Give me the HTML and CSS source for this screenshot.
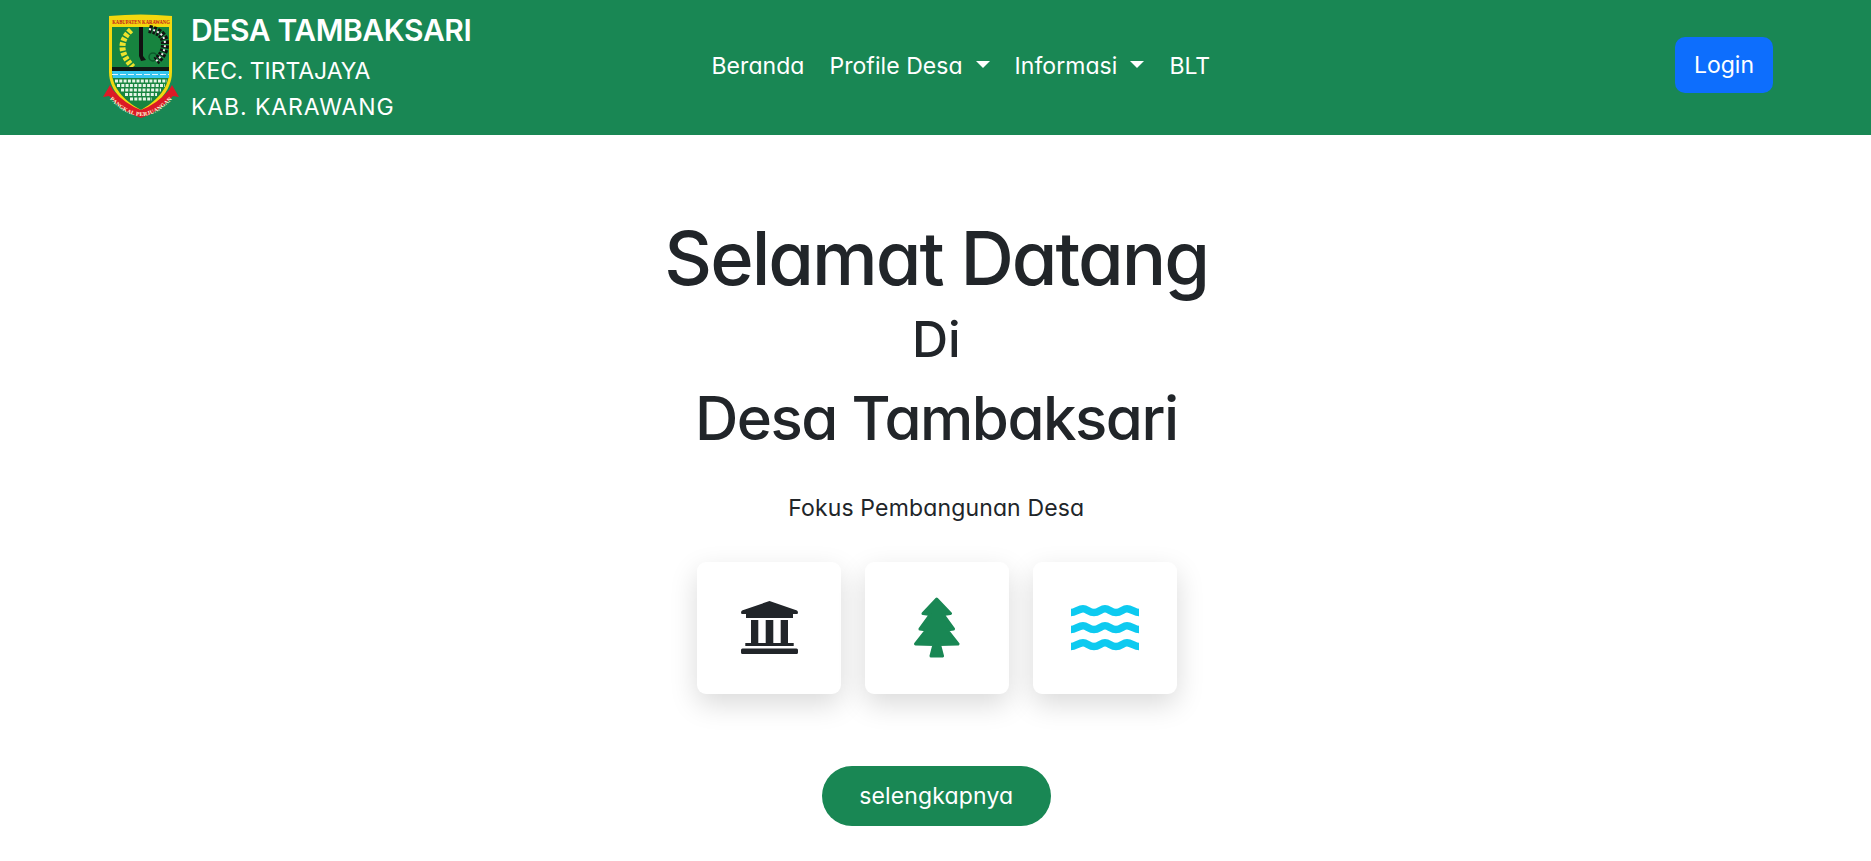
FILE: index.html
```html
<!DOCTYPE html>
<html lang="id">
<head>
<meta charset="utf-8">
<title>Desa Tambaksari</title>
<link rel="stylesheet" href="styles.css">
</head>
<body>
<nav class="navbar">
  <a class="brand" href="#">
    <svg class="logo" viewBox="0 0 84 110" aria-hidden="true">
      <defs><path id="ribbon-arc" d="M8 87 Q41 125 74 87"/></defs>
      <path d="M9 6 Q41 3 72 6 V62 C72 82 55 96 41 103 C27 96 9 82 9 62 Z" fill="#f3d80f"/>
      <path d="M12 17 H69 V62 C69 80 53 93 41 100 C28 93 12 80 12 62 Z" fill="#17843f"/>
      <text class="logo-top" transform="translate(41 14) scale(.72 1)" text-anchor="middle">KABUPATEN KARAWANG</text>
      <path class="logo-wheat" d="M31 20 Q13 37 33 57"/>
      <path d="M39 17 H43 V46 L46 50 L41 51 L39 46 Z" fill="#111"/>
      <circle cx="53" cy="47" r="4" fill="none" stroke="#0c5a2b" stroke-width="1.500"/>
      <path class="logo-chain" d="M49 19 Q65 22 65 34 Q65 44 56 51"/>
      <path class="logo-chain-links" d="M49 19 Q65 22 65 34 Q65 44 56 51"/>
      <path d="M12 57 H69 V61 H12 Z" fill="#101a14"/>
      <path d="M12 61 H69 V68 H13 Z" fill="#35c5ef"/>
      <path class="logo-foam" d="M12 64.500 H69"/>
      <path class="logo-dots" d="M15 71 H67"/>
      <path class="logo-dots" d="M17 75.500 H65"/>
      <path class="logo-dots" d="M21 80 H61"/>
      <path class="logo-dots" d="M25 84.500 H57"/>
      <path class="logo-dots" d="M30 89 H52"/>
      <path d="M3 87 L10 75 L13 80 Q25 94 41 100 Q57 94 69 80 L72 75 L79 87 L73 86 Q58 103 41 108 Q24 103 9 86 Z" fill="#dc1a26"/>
      <text class="logo-ribbon"><textPath href="#ribbon-arc" startOffset="50%" text-anchor="middle">PANGKAL PERJUANGAN</textPath></text>
    </svg>
    <span class="brand-text">
      <span class="brand-title">DESA TAMBAKSARI</span>
      <span class="brand-line brand-kec">KEC. TIRTAJAYA</span>
      <span class="brand-line brand-kab">KAB. KARAWANG</span>
    </span>
  </a>
  <ul class="menu">
    <li><a class="menu-link" href="#">Beranda</a></li>
    <li><a class="menu-link" href="#">Profile Desa<i class="caret"></i></a></li>
    <li><a class="menu-link" href="#">Informasi<i class="caret"></i></a></li>
    <li><a class="menu-link" href="#">BLT</a></li>
  </ul>
  <a class="login" href="#">Login</a>
</nav>

<main class="hero">
  <h1 class="hero-title">Selamat Datang</h1>
  <h2 class="hero-di">Di</h2>
  <h2 class="hero-name">Desa Tambaksari</h2>
  <p class="hero-focus">Fokus Pembangunan Desa</p>
  <div class="cards">
    <div class="card">
      <svg class="icon" viewBox="0 0 57 53" aria-hidden="true">
        <path class="ink" d="M28.5 0 L56 9.500 Q57 10 57 12 Q57 13 55.500 13 H52 V17 H5 V13 H1.500 Q0 13 0 12 Q0 10 1 9.500 Z M10 19 H17.300 V42 H10 Z M24.700 19 H32.300 V42 H24.700 Z M39.700 19 H47 V42 H39.700 Z M4.300 42 H52.700 V45 H4.300 Z M1.500 47.500 H55.500 Q57 47.500 57 49 V51.500 Q57 53 55.500 53 H1.500 Q0 53 0 51.500 V49 Q0 47.500 1.500 47.500 Z"/>
      </svg>
    </div>
    <div class="card">
      <svg class="icon" viewBox="0 0 46 61" aria-hidden="true">
        <path class="leaf" d="M22.700 2 L36.500 16.500 L29 17.500 L39.500 32 L33 33 L44 47 L25.500 47.500 L28.500 59 H17 L20 47.500 L1.500 47 L12.500 33 L6 32 L16.500 17.500 L9 16.500 Z"/>
      </svg>
    </div>
    <div class="card">
      <svg class="icon" viewBox="0 0 68 46" aria-hidden="true">
        <g class="wave">
          <path d="M0 7.500 C4 7.500 8 3.800 12 3.800 C16 3.800 18 7.500 23 7.500 C28 7.500 30 3.800 34 3.800 C38 3.800 40 7.500 45 7.500 C50 7.500 52 3.800 56 3.800 C60 3.800 64 7.500 68 7.500"/>
          <path d="M0 24.500 C4 24.500 8 20.800 12 20.800 C16 20.800 18 24.500 23 24.500 C28 24.500 30 20.800 34 20.800 C38 20.800 40 24.500 45 24.500 C50 24.500 52 20.800 56 20.800 C60 20.800 64 24.500 68 24.500"/>
          <path d="M0 41.500 C4 41.500 8 37.800 12 37.800 C16 37.800 18 41.500 23 41.500 C28 41.500 30 37.800 34 37.800 C38 37.800 40 41.500 45 41.500 C50 41.500 52 37.800 56 37.800 C60 37.800 64 41.500 68 41.500"/>
        </g>
      </svg>
    </div>
  </div>
  <a class="more" href="#">selengkapnya</a>
</main>
</body>
</html>
```
FILE: styles.css
```css
* { box-sizing: border-box; }
html, body { margin: 0; padding: 0; }
body {
  font-family: Inter, "Noto Sans", sans-serif;
  font-feature-settings: "cv11" 1;
  color: #212529;
  background: #fff;
}
a { color: inherit; text-decoration: none; }

.navbar {
  height: 135px;
  background: #198754;
  color: #fff;
  display: flex;
  align-items: center;
  padding: 0 98px 5px 100px;
}
.brand { align-self: flex-start; height: 135px; display: flex; align-items: center; gap: 7px; width: 599px; }
.logo { width: 84px; height: 110px; flex: none; margin-bottom: 6px; }
.logo-top { font: 700 6.500px "Liberation Serif", serif; fill: #c2121c; }
.logo-ribbon { font: 700 5.800px "Liberation Serif", serif; fill: #fff6d8; letter-spacing: .2px; }
.logo-wheat { fill: none; stroke: #eee22c; stroke-width: 6; stroke-dasharray: 3.500 1.500; }
.logo-chain { fill: none; stroke: #111; stroke-width: 8; stroke-dasharray: 3 1.200; }
.logo-chain-links { fill: none; stroke: #eee; stroke-width: 2; stroke-dasharray: 2 2.200; }
.logo-foam { stroke: #e3f6ff; stroke-width: 1.200; stroke-dasharray: 6 2; }
.logo-dots { stroke: #e6f5e6; stroke-width: 3; stroke-dasharray: 3 1.300; }

.brand-text { display: flex; flex-direction: column; }
.brand-title { font-size: 30px; font-weight: 600; line-height: 38px; letter-spacing: -0.4px; margin-bottom: 4px; }
.brand-line { font-size: 23px; line-height: 36px; }
.brand-kec { letter-spacing: -0.07px; }
.brand-kab { letter-spacing: 0.9px; }

.menu { list-style: none; margin: 2px 0 0; padding: 0; display: flex; flex: 1; }
.menu-link { display: flex; align-items: center; padding: 0 12.500px; font-size: 23px; line-height: 36px; letter-spacing: 0.05px; }
.caret {
  display: block;
  margin: -3px 0 0 13px;
  border-top: 7px solid #fff;
  border-left: 7px solid transparent;
  border-right: 7px solid transparent;
}
.login {
  width: 98px;
  height: 56px;
  border-radius: 10px;
  background: #0d6efd;
  display: flex;
  align-items: center;
  justify-content: center;
  font-size: 23px;
}

.hero { display: flex; flex-direction: column; align-items: center; padding: 78px 0 0 1.500px; }
.hero-title { margin: 0; font-size: 74px; font-weight: 500; line-height: 90px; letter-spacing: -2px; }
.hero-di { margin: 8px 0 0; font-size: 50px; font-weight: 500; line-height: 56px; }
.hero-name { margin: 15px 0 0; font-size: 60px; font-weight: 500; line-height: 72px; letter-spacing: -1.500px; }
.hero-focus { margin: 36px 0 0; font-size: 23px; line-height: 36px; letter-spacing: 0.15px; }
.cards { display: flex; gap: 24px; margin: 35.500px 0 0 1.500px; }
.card {
  width: 144px;
  height: 132px;
  border-radius: 9px;
  background: #fff;
  box-shadow: 0 10px 28px rgba(0, 0, 0, .15);
  display: flex;
  align-items: center;
  justify-content: center;
}
.card:nth-child(1) .icon { width: 57px; height: 53px; }
.card:nth-child(2) .icon { width: 46px; height: 61px; }
.card:nth-child(3) .icon { width: 68px; height: 46px; }
.ink { fill: #212529; }
.leaf { fill: #198754; stroke: #198754; stroke-width: 3; stroke-linejoin: round; }
.wave path { fill: none; stroke: #0dcaf0; stroke-width: 7.500; }
.more {
  margin: 72px 0 0;
  width: 229px;
  height: 60px;
  border-radius: 30px;
  background: #198754;
  color: #fff;
  display: flex;
  align-items: center;
  justify-content: center;
  font-size: 23px;
  letter-spacing: 0.15px;
}
```
